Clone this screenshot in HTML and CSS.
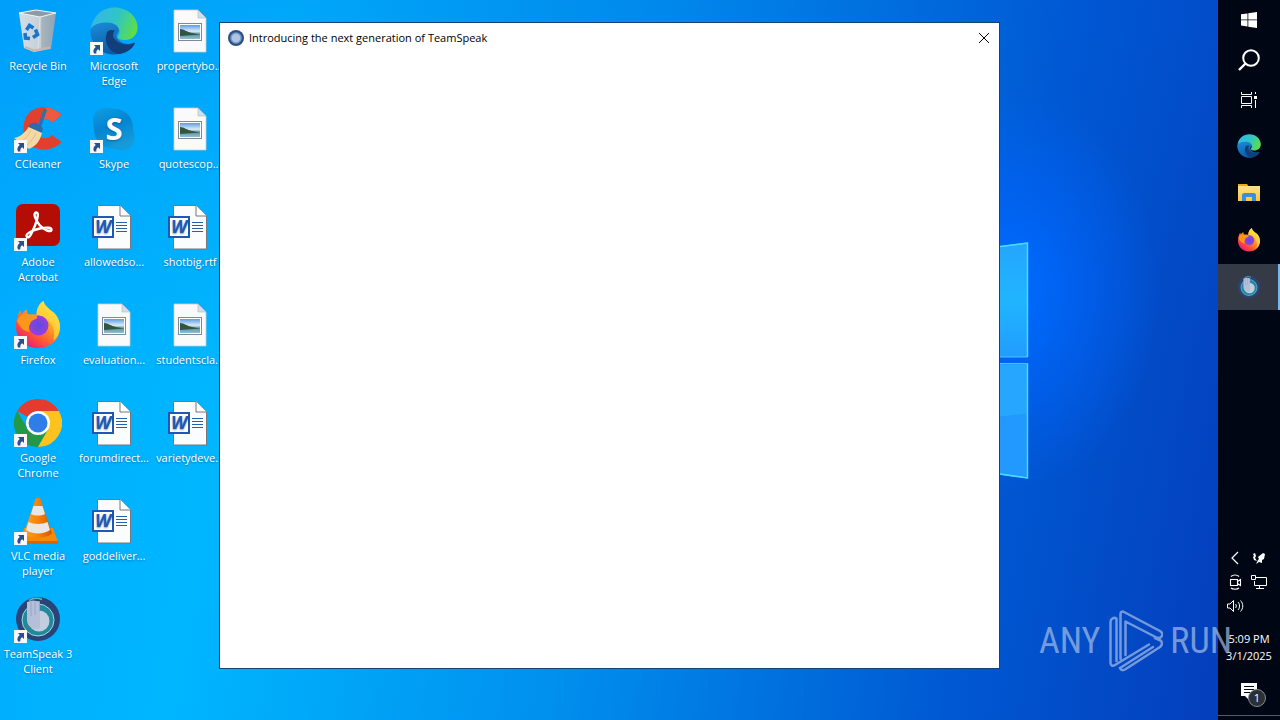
FILE: index.html
```html
<!DOCTYPE html>
<html lang="en">
<head>
<meta charset="utf-8">
<title>Desktop</title>
<link rel="stylesheet" href="styles.css">
</head>
<body>
<svg class="defs" aria-hidden="true">
  <defs>
    <linearGradient id="edge-top" x1="0" y1="0.4" x2="1" y2="0.7"><stop offset="0" stop-color="#35b6e8"/><stop offset="0.5" stop-color="#2fc6c4"/><stop offset="1" stop-color="#62e03c"/></linearGradient>
    <linearGradient id="edge-left" x1="0" y1="0" x2="0.4" y2="1"><stop offset="0" stop-color="#1c8fdc"/><stop offset="1" stop-color="#0c59a4"/></linearGradient>
    <linearGradient id="ff-body" x1="0.85" y1="0.1" x2="0.2" y2="0.95"><stop offset="0" stop-color="#fff048"/><stop offset="0.4" stop-color="#ff9a1f"/><stop offset="0.75" stop-color="#ff4a3d"/><stop offset="1" stop-color="#e3197b"/></linearGradient>
    <radialGradient id="ff-core"><stop offset="0" stop-color="#5b4be0"/><stop offset="1" stop-color="#9a3fd8"/></radialGradient>
    <linearGradient id="skype-bg" x1="0" y1="0" x2="0.4" y2="1"><stop offset="0" stop-color="#109fe2"/><stop offset="0.5" stop-color="#0484d2"/><stop offset="1" stop-color="#169ad8"/></linearGradient>
    <linearGradient id="photo" x1="0" y1="0" x2="0" y2="1"><stop offset="0" stop-color="#5f9be0"/><stop offset="0.45" stop-color="#d8ecf8"/><stop offset="0.65" stop-color="#5d8f9c"/><stop offset="1" stop-color="#8fc0dc"/></linearGradient>
    <linearGradient id="bin" x1="0" y1="0" x2="1" y2="0"><stop offset="0" stop-color="#d3dfe8"/><stop offset="0.6" stop-color="#c4ced6"/><stop offset="0.61" stop-color="#aab4bc"/><stop offset="1" stop-color="#8ea4b6"/></linearGradient>
    <linearGradient id="cone" x1="0" y1="0" x2="1" y2="0"><stop offset="0" stop-color="#ffa02c"/><stop offset="0.5" stop-color="#f98207"/><stop offset="1" stop-color="#cf5a00"/></linearGradient>
    <linearGradient id="folder" x1="0" y1="0" x2="0" y2="1"><stop offset="0" stop-color="#ffe08a"/><stop offset="1" stop-color="#fbc940"/></linearGradient>

    <symbol id="shortcut" viewBox="0 0 13 13">
      <rect width="13" height="13" fill="#f6f8fb"/>
      <path d="M4 3h6v6L8.200 7.200C6.600 8.200 6 9.500 6.400 11.400H4C2.700 8.800 3.600 6.500 5.800 4.900z" fill="#2b4f8e"/>
    </symbol>

    <symbol id="recycle" viewBox="0 0 48 48">
      <path d="M5 6L22 3l20 3-5 36-17 3-10-4z" fill="url(#bin)"/>
      <path d="M5 6l17-3 20 3-16 4z" fill="#8f9aa4" stroke="#f2f5f7" stroke-width="1"/>
      <path d="M26 10l-2 34" stroke="#e0e6ea" stroke-width="0.800"/>
      <g fill="none" stroke="#1875cf" stroke-width="3.600"><path d="M12.500 23l3-4.500 4 2.500"/><path d="M21.500 22.500l2 5-4.500 3"/><path d="M16 31.500l-4.500-.5-.5-5"/></g>
      <path d="M11 40l9 3.500 16-3" stroke="#c9b6ac" stroke-width="2" fill="none"/>
    </symbol>

    <symbol id="edge" viewBox="0 0 48 48">
      <path d="M.5 24C.5 37 11 47.500 24 47.500c9 0 17-4 20.600-10.500.4-1-.4-1.600-1.300-1C38 38 32 37 28 32.500 25 29 27 26 29 24 29 16 22 13 14 14 6 15 .5 20 .5 24z" fill="url(#edge-left)"/>
      <path d="M.8 22C3 8 13 .5 24.500.5 38 .5 47.600 10 47.600 20.500c0 8-6 12.500-12.600 12.500-4.500 0-7.500-1.300-7.500-3 0-1.200 2-2 2-5.500 0-4.500-4.500-9-12-9C8 15.500 3 18 .8 22z" fill="url(#edge-top)"/>
      <path d="M17.500 24.500C12.500 34 19 46 30 47c7-1.500 12-5 14.600-10 .4-1-.4-1.600-1.300-1-5.500 3-15.500 1.500-19.500-5-1.500-2.500-.5-5.500 1-7.500-3-1-6-.5-7.300 1z" fill="#123f7c"/>
    </symbol>

    <symbol id="ccleaner" viewBox="0 0 48 48">
      <path d="M47.500 10L38 17.500c-5-6-15.500-4-15.500 6.500 0 9.500 10 12 15.500 6l9.500 7C37 49 10 48 9.500 24 10-2 37-2 47.500 10z" fill="#e0402c"/>
      <path d="M47.500 10L38 17.500c-2.500-3-6.500-4-10-2.500L31 2.500c6 0 12.500 3 16.500 7.500z" fill="#ee5a3e"/>
      <path d="M31 5.500L26 20" stroke="#2f6fae" stroke-width="3.500" stroke-linecap="round"/>
      <path d="M15 20c5-4 10-3 14 4l-2 5-13-5z" fill="#2a6cae"/>
      <path d="M14.500 22L28 28c-2 8-6 13-13 16L0 33c6-1 11-5 14.500-11z" fill="#f5d9a4"/>
      <path d="M17 25c-2 5-6 9-10 12M22 28c-2 5-6 10-10 13" stroke="#e0bd80" fill="none"/>
    </symbol>

    <symbol id="skype" viewBox="0 0 48 48">
      <path d="M3 15C3 7 9 3 16 3c4 0 5 1 9 1 10 0 18 8 18 18 0 4 1.500 6 1.500 10C44.500 40 39 45 32 45c-4 0-5-1.500-9-1.500C12 43.500 4 35 4 25c0-4-1-6-1-10z" fill="url(#skype-bg)"/>
      <text x="24" y="35" text-anchor="middle" class="skype-letter">S</text>
    </symbol>

    <symbol id="acrobat" viewBox="0 0 48 48">
      <rect x="2" y="1" width="44" height="42" rx="7" fill="#b40d06"/>
      <path d="M13 34c-3-3 6-7 13-8.500s12-1 11.500 1.500-7.500.5-12-5-6.500-12-3.500-12.500 2 6-1 13-5.500 13.500-8 11.500z" fill="none" stroke="#fff" stroke-width="2.400" stroke-linejoin="round"/>
    </symbol>

    <symbol id="firefox" viewBox="0 0 48 48">
      <path d="M29.500 0c1 5 5 7 8 10 4 2 9 9 8.500 17C45.500 39 36 47 24 47S2 38 2 25.500C2 19 4 12 6.500 9.500c.5 1.500.8 2.800 1.500 3.500 1-2 3-4 5-4.500-.5 2 .5 4 1.500 5h8c0-6 3-11 7-13.500z" fill="url(#ff-body)"/>
      <path d="M29.500 0c1 5 5 7 8 10 4 2 9 9 8.500 17-1 7-4 11-7 13 3-8 0-17-5-21-5-4-8-4-11.500-5.500C22.500 7.500 25.500 2.500 29.500 0z" fill="#ffdc3e" opacity="0.700"/>
      <circle cx="24.500" cy="24.500" r="10" fill="url(#ff-core)"/>
      <path d="M3 20c2-6 8-8 12-6.500h5c2 1 4 2.500 3 3.500-1 1.500-5 2-6 4-2 3-3 7-1 10C8 30 5 24 3 20z" fill="#ff961c"/>
    </symbol>

    <symbol id="chrome" viewBox="0 0 48 48">
      <path d="M24 24L3.200 12A24 24 0 0 1 44.800 12z" fill="#e33b2e"/>
      <path d="M24 48A24 24 0 0 1 3.200 12L13.600 30 34.400 30z" fill="#229848"/>
      <path d="M34.400 30L24 48A24 24 0 0 0 44.800 12H24z" fill="#fcc31e"/>
      <circle cx="24" cy="24" r="12" fill="#fff"/><circle cx="24" cy="24" r="9.500" fill="#2f7de8"/>
    </symbol>

    <symbol id="vlc" viewBox="0 0 48 48">
      <path d="M10 31h29l5 14c0 2-1 2-2 2H9c-2 0-2-1-2-2z" fill="#f58a0a"/>
      <path d="M7 44h37v3H8z" fill="#d86500"/>
      <path d="M21.500 2c1-1.300 4-1.300 5 0L38 36c-3 6-25 6-28 0z" fill="url(#cone)"/>
      <path d="M19.500 9h9l2.500 8c-4 2-10 2-14 0zM14.500 25c5 2.500 14 2.500 19 0l2.500 8c-6 4.500-18 4.500-24 0z" fill="#e9e6e6"/>
    </symbol>

    <symbol id="teamspeak" viewBox="0 0 48 48">
      <circle cx="24" cy="24" r="22" fill="#2b4478"/>
      <circle cx="24" cy="25" r="16" fill="#1d8a9e" stroke="#a9d6dc" stroke-width="1"/>
      <circle cx="25" cy="26" r="10.500" fill="#c3cde0"/>
      <path d="M13 7l6-1.500 7 1V33c-7 3-13-2-13-8z" fill="#b5bfd9"/>
      <path d="M25.500 6.500v10M21 6.500v13M17 7v14" stroke="#8d9fc4" stroke-width="0.800"/>
      <path d="M15 5.500c5-3 9-3 13-1" stroke="#5bb8c3" stroke-width="1.500" fill="none"/>
    </symbol>

    <symbol id="word" viewBox="0 0 48 48">
      <path d="M7.500 2.500H30L40.500 13v33h-33z" fill="#fafcfd" stroke="#74777c"/>
      <path d="M30 2.500V13h10.500" fill="#fff" stroke="#74777c"/>
      <path d="M26 19.500h11M26 22.500h11M26 25.500h11M26 28.500h11" stroke="#2462ac" stroke-width="1"/>
      <rect x="3" y="14" width="20" height="20" fill="#fff" stroke="#1d59b5" stroke-width="2"/>
      <text x="13" y="30" text-anchor="middle" class="word-letter">W</text>
    </symbol>

    <symbol id="image" viewBox="0 0 48 48">
      <path d="M8 3h24l8 8v34H8z" fill="#fafafa" stroke="#c6ccd2" stroke-width="0.800"/>
      <path d="M32 3v8h8z" fill="#cfe0ec" stroke="#aab8c4" stroke-width="0.600"/>
      <rect x="12.500" y="16.500" width="23" height="17" fill="#fff" stroke="#7c8b99"/>
      <rect x="14" y="18" width="20" height="14" fill="url(#photo)"/>
      <path d="M14 22c4 0 7 3 12 4l8 1.500-20 1.500z" fill="#33543f"/>
    </symbol>

    <symbol id="ts-small" viewBox="0 0 16 16">
      <circle cx="8" cy="8" r="8" fill="#2f4f84"/><circle cx="8" cy="8" r="5.800" fill="#6f9cc8"/><circle cx="8" cy="8" r="4.300" fill="#b0c4e2"/>
    </symbol>
  </defs>
</svg>

<main class="desktop">
  <svg class="wallpaper-logo" viewBox="0 0 30 240" aria-hidden="true">
    <defs>
      <linearGradient id="pane-a" x1="0" y1="0" x2="0" y2="1"><stop offset="0" stop-color="#25a5ff"/><stop offset="0.500" stop-color="#20b5ff"/><stop offset="1" stop-color="#229cff"/></linearGradient>
    </defs>
    <path d="M-2 6L27.500 2v114H-2z" fill="url(#pane-a)" stroke="#3cc8ff" stroke-width="1"/>
    <path d="M-2 122.500h29.500v114.500L-2 233z" fill="#2299ff" stroke="#3cc8ff" stroke-width="1"/>
    <path d="M0 123.500h27v49L0 175.500z" fill="#26a6ff"/>
    <path d="M0 5.500L27.500 2v114M27.500 122.500V237L0 233" fill="none" stroke="#48dcff" stroke-width="1.500"/>
  </svg>

  <div class="icons">
    <button class="icon"><svg><use href="#recycle"/></svg><span>Recycle Bin</span></button>
    <button class="icon"><svg><use href="#ccleaner"/><use href="#shortcut" y="35" width="13" height="13"/></svg><span>CCleaner</span></button>
    <button class="icon"><svg><use href="#acrobat"/><use href="#shortcut" y="35" width="13" height="13"/></svg><span>Adobe<br>Acrobat</span></button>
    <button class="icon"><svg><use href="#firefox"/><use href="#shortcut" y="35" width="13" height="13"/></svg><span>Firefox</span></button>
    <button class="icon"><svg><use href="#chrome"/><use href="#shortcut" y="35" width="13" height="13"/></svg><span>Google<br>Chrome</span></button>
    <button class="icon"><svg><use href="#vlc"/><use href="#shortcut" y="35" width="13" height="13"/></svg><span>VLC media<br>player</span></button>
    <button class="icon"><svg><use href="#teamspeak"/><use href="#shortcut" y="35" width="13" height="13"/></svg><span>TeamSpeak 3<br>Client</span></button>
    <button class="icon"><svg><use href="#edge"/><use href="#shortcut" y="35" width="13" height="13"/></svg><span>Microsoft<br>Edge</span></button>
    <button class="icon"><svg><use href="#skype"/><use href="#shortcut" y="35" width="13" height="13"/></svg><span>Skype</span></button>
    <button class="icon"><svg><use href="#word"/></svg><span>allowedso...</span></button>
    <button class="icon"><svg><use href="#image"/></svg><span>evaluation...</span></button>
    <button class="icon"><svg><use href="#word"/></svg><span>forumdirect...</span></button>
    <button class="icon"><svg><use href="#word"/></svg><span>goddeliver...</span></button>
    <button class="icon third"><svg><use href="#image"/></svg><span>propertybo...</span></button>
    <button class="icon"><svg><use href="#image"/></svg><span>quotescop...</span></button>
    <button class="icon"><svg><use href="#word"/></svg><span>shotbig.rtf</span></button>
    <button class="icon"><svg><use href="#image"/></svg><span>studentscla...</span></button>
    <button class="icon"><svg><use href="#word"/></svg><span>varietydeve...</span></button>
  </div>

  <section class="window" aria-labelledby="window-title">
    <header class="titlebar">
      <svg class="title-icon" aria-hidden="true"><use href="#ts-small"/></svg>
      <h1 id="window-title">Introducing the next generation of TeamSpeak</h1>
      <button class="close" aria-label="Close"><svg viewBox="0 0 10 10"><path d="M0 0l10 10M10 0L0 10" stroke="#000" fill="none"/></svg></button>
    </header>
  </section>
</main>

<aside class="taskbar">
  <nav class="tasks">
    <button class="tool" aria-label="Start"><svg class="s16" viewBox="0 0 16 16"><path d="M0 2.300L6.500 1.400v6.100H0zM7.300 1.300L16 0v7.500H7.300zM0 8.300h6.500v6.200L0 13.600zM7.300 8.300H16V16l-8.700-1.300z" fill="#fff"/></svg></button>
    <button class="tool" aria-label="Search"><svg class="s22" viewBox="0 0 22 22"><circle cx="13" cy="9" r="7.800" fill="none" stroke="#fff" stroke-width="2"/><path d="M7.500 14.500L1 21" stroke="#fff" stroke-width="2.400"/></svg></button>
    <button class="tool" aria-label="Task view"><svg class="s16" viewBox="0 0 16 16"><path d="M.5 0v2.500h10V0M.5 16v-2.500h10V16M.5 4.500h10v7H.5zM14.500 0v2M14.500 8v8" fill="none" stroke="#fff"/><rect x="13" y="4" width="3" height="3" fill="#fff"/></svg></button>
    <button class="app first" aria-label="Microsoft Edge"><svg class="s24"><use href="#edge"/></svg></button>
    <button class="app" aria-label="File Explorer"><svg class="s24" viewBox="0 0 24 24"><path d="M1 3h9l1.500 2H23v14H1z" fill="#e8a91c"/><path d="M1 5h22v15H1z" fill="url(#folder)"/><path d="M5 20v-6c0-1 1-2 2-2h10c1 0 2 1 2 2v6h-4v-4H9v4z" fill="#3b8ee0"/></svg></button>
    <button class="app" aria-label="Firefox"><svg class="s24"><use href="#firefox"/></svg></button>
    <button class="app active" aria-label="TeamSpeak"><svg class="s24"><use href="#teamspeak"/></svg></button>
  </nav>
  <div class="tray">
    <button aria-label="Show hidden icons"><svg viewBox="0 0 18 18"><path d="M12 3L6 9l6 6" fill="none" stroke="#fff" stroke-width="1.200"/></svg></button>
    <button aria-label="Pen"><svg viewBox="0 0 18 18"><path d="M3 5l2-1 1 3-1 2 2 3-3-1-1-3 1-1zM8 8l5-4 2 1-1 5-2 1v3l-3-1-3 2 2-4 1-1z" fill="#fff"/></svg></button>
    <button aria-label="Meet now"><svg viewBox="0 0 18 18"><path d="M4.500 6.500h7v6h-7zM11.500 8.500l3-2v6l-3-2M5 3.500c2-2 6-2 8 0M5 15c2 1.700 6 1.700 8 0" fill="none" stroke="#fff" stroke-width="1.100"/></svg></button>
    <button aria-label="Network"><svg viewBox="0 0 18 18"><path d="M6 4.500h10.500v8H4.500V8M9.500 12.500v3M6 15.500h8M1.500 2.500h4v4h-4z" fill="none" stroke="#fff"/></svg></button>
    <button aria-label="Volume"><svg viewBox="0 0 18 18"><path d="M1.500 7h2.500l3.500-3.500v11L4 11H1.500zM9.500 7c1 1 1 3 0 4M12 5c2 2 2 6 0 8M14.500 3.500c3 3 3 8 0 11" fill="none" stroke="#fff"/></svg></button>
  </div>
  <button class="clock"><span>5:09 PM</span><span>3/1/2025</span></button>
  <button class="notifications" aria-label="Notifications"><svg viewBox="0 0 26 26"><path d="M1 1h16v13H9v4l-4-4H1z" fill="#fff"/><path d="M4 4.500h10M4 7.500h10M4 10.500h7" stroke="#000714"/></svg><span class="badge">1</span></button>
</aside>

<div class="watermark">
  <span>ANY</span>
  <svg viewBox="0 0 56 62" aria-hidden="true"><path d="M9.500 10V8.500C7 7 3.500 8.500 3.500 12v41c0 2.500 2 3.500 4.500 2L42 34.500M13.500 49V4c0-2 1.500-3 3.500-2l36 19c3 2 3 4.500.5 6.500l-3 .5L18.500 11.500V45M9.500 10v41M13 58c1 2.500 3 2.500 5 1.500L53 37c2.500-2 2.500-5 .5-6.500L48 28M13 58l33-21" fill="none" stroke="currentColor" stroke-width="2.500" stroke-linejoin="round" stroke-linecap="round"/></svg>
  <span>RUN</span>
</div>
</body>
</html>
```
FILE: styles.css
```css
* { box-sizing: border-box; }

body {
  margin: 0;
  min-height: 100vh;
  display: flex;
  position: relative;
  overflow: hidden;
  font-family: "Open Sans", "Noto Sans", sans-serif;
  font-size: 11px;
  line-height: 15px;
}

button {
  margin: 0;
  padding: 0;
  border: 0;
  background: none;
  color: inherit;
  font: inherit;
}

svg { display: block; }

.defs { position: absolute; width: 0; height: 0; }

/* Desktop */
.desktop {
  flex: 1;
  position: relative;
  overflow: hidden;
  background:
    radial-gradient(ellipse 150px 200px at 1010px 290px, rgba(0, 108, 255, 1), rgba(0, 102, 255, 0.6) 45%, rgba(0, 90, 230, 0)),
    linear-gradient(to bottom, rgba(0, 90, 220, 0.16), rgba(0, 90, 220, 0) 50%),
    linear-gradient(100deg, #00acff 0, #00b6ff 22%, #0090ee 50%, #0058d2 80%, #043ebc 100%);
}

.wallpaper-logo {
  position: absolute;
  left: 1000px;
  top: 241px;
  width: 30px;
  height: 240px;
}

.icons {
  position: relative;
  display: grid;
  grid-auto-flow: column;
  grid-template-rows: repeat(7, 98px);
  grid-auto-columns: 76px;
}

.icon {
  display: flex;
  flex-direction: column;
  align-items: center;
  gap: 3px;
  padding-top: 7px;
  color: #fff;
  text-shadow: 0 1px 2px rgba(0, 50, 100, 0.5);
}

.icon svg { width: 48px; height: 48px; }
.icon.third { grid-column: 3; grid-row: 1; }
.icon.third ~ .icon { grid-column: 3; }

.skype-letter { font: bold 31px "Open Sans", sans-serif; fill: #fff; }
.word-letter { font: italic bold 18px "Open Sans", sans-serif; fill: #1d59b5; }

/* Window */
.window {
  position: absolute;
  left: 219px;
  top: 22px;
  width: 781px;
  height: 647px;
  background: #fff;
  border: 1px solid #16446e;
}

.titlebar {
  display: flex;
  align-items: center;
  height: 29px;
  padding: 0 10px 0 8px;
}

.title-icon { width: 16px; height: 16px; }

h1 {
  flex: 1;
  margin: 0 0 0 5px;
  font-size: 11px;
  font-weight: 400;
  line-height: 15px;
  color: #000;
}

.close svg { width: 10px; height: 10px; }

/* Taskbar */
.taskbar {
  width: 62px;
  display: flex;
  flex-direction: column;
  background: #000614;
  color: #fff;
  padding-bottom: 4px;
}

.tasks { flex: 1; display: flex; flex-direction: column; gap: 1px; }

.tool, .app { display: flex; align-items: center; justify-content: center; }
.tool { height: 39px; }
.app { height: 46px; }
.app.first { margin-top: 3px; }
.app.active { background: #343b47; border-right: 2px solid #76b9ed; padding-left: 2px; }

.s16 { width: 16px; height: 16px; }
.s22 { width: 22px; height: 22px; }
.s24 { width: 24px; height: 24px; }

.tray {
  display: grid;
  grid-template-columns: repeat(2, 24px);
  grid-auto-rows: 24px;
  padding-left: 5px;
}

.tray button { display: grid; place-items: center; }
.tray svg { width: 18px; height: 18px; }

.clock {
  display: flex;
  flex-direction: column;
  align-items: center;
  padding: 12px 0 9px;
  line-height: 17px;
}

.notifications {
  position: relative;
  display: flex;
  justify-content: center;
  height: 43px;
  padding: 9px 0 0 8px;
  border-bottom: 1px solid #555b66;
}

.notifications svg { width: 26px; height: 26px; }

.badge {
  position: absolute;
  left: 30px;
  top: 16px;
  width: 18px;
  height: 18px;
  border: 1px solid #878b92;
  border-radius: 50%;
  background: #2b2f36;
  line-height: 16px;
}

/* Watermark */
.watermark {
  position: absolute;
  right: 48px;
  bottom: 48px;
  display: flex;
  align-items: center;
  gap: 7px;
  font-family: "Liberation Sans Narrow", "Roboto Condensed", Roboto, sans-serif;
  font-size: 36px;
  line-height: 62px;
  color: #a4bde6;
  opacity: 0.7;
  pointer-events: none;
}

.watermark svg { width: 56px; height: 62px; }
```
